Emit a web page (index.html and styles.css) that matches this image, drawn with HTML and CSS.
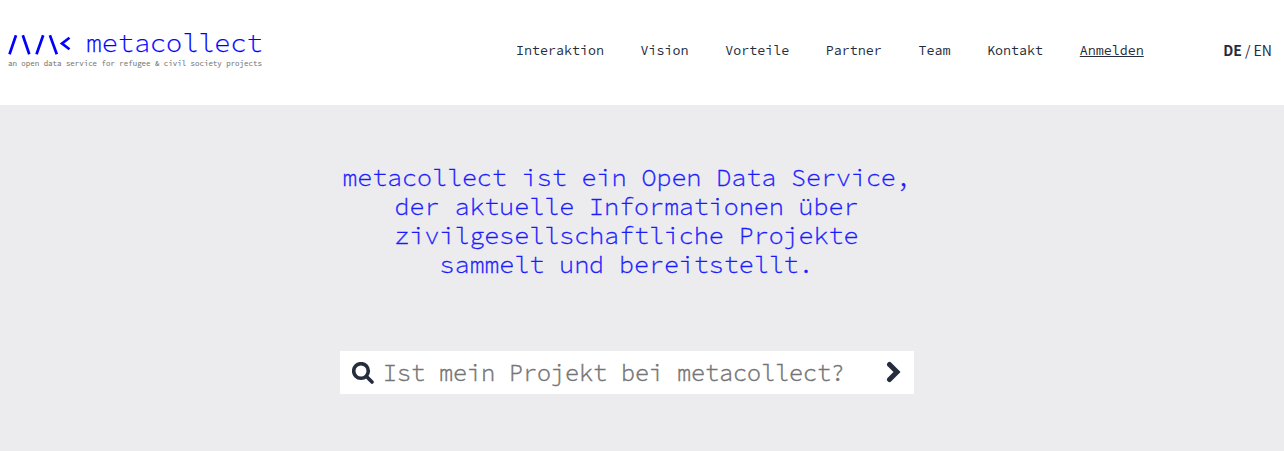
FILE: index.html
```html
<!DOCTYPE html>
<html lang="de"><head><meta charset="utf-8"><title>metacollect</title><link rel="stylesheet" href="styles.css"></head>
<body>
<header class="header">
<a class="brand"><span class="brand-row"><svg class="mark" viewBox="0 0 63 22" width="63" height="22"><path d="M1.500 20.300L8 1.300M14.800 1.300L21.300 20.300M28.500 20.300L35.200 1.300M41.900 1.300L48.800 20.300"/><path d="M61.500 3.800L54 9.500L61.500 15.200"/></svg><span class="name">metacollect</span></span><span class="tagline">an open data service for refugee &amp; civil society projects</span></a>
<nav class="nav"><a>Interaktion</a><a>Vision</a><a>Vorteile</a><a>Partner</a><a>Team</a><a>Kontakt</a><a class="login">Anmelden</a></nav>
<div class="lang"><b>DE</b> / EN</div>
</header>
<main class="hero">
<h1 class="title"><span>metacollect ist ein Open Data Service,</span><span>der aktuelle Informationen über</span><span>zivilgesellschaftliche Projekte</span><span>sammelt und bereitstellt.</span></h1>
<form class="search"><svg class="glass" viewBox="0 0 22 22" width="22" height="22"><circle cx="9" cy="9" r="7.300"/><path d="M14.500 14.500L20 20"/></svg><span class="placeholder">Ist mein Projekt bei metacollect?</span><svg class="arrow" viewBox="0 0 16 22" width="16" height="22"><path d="M3.500 3.500L11 11L3.500 18.500"/></svg></form>
</main>
</body></html>
```
FILE: styles.css
```css
* { box-sizing: border-box; }
body { margin: 0; background: #fff; color: #252c3d; font-family: "Source Code Pro", "Noto Sans Mono", "DejaVu Sans Mono", monospace; }
.header { height: 105px; display: flex; align-items: flex-start; white-space: nowrap; }
.brand { width: 516px; padding: 29px 0 0 8px; display: block; }
.brand-row { display: flex; height: 28px; align-items: center; }
.mark { margin-top: 3px; margin-right: 14.7px; fill: none; stroke: #00f; stroke-width: 2.7; }
.name { color: #00f; font-size: 26.8px; font-weight: 300; line-height: 28px; -webkit-text-stroke: .25px #00f; }
.tagline { display: block; color: #777; font-size: 7.43px; line-height: 14px; -webkit-text-stroke: .1px #777; }
.nav { display: flex; gap: 36.65px; font-size: 13.33px; line-height: 20px; padding-top: 41px; }
.login { text-decoration: underline; text-underline-offset: 1px; }
.lang { margin-left: auto; margin-right: 12px; padding-top: 40px; font: 14px/20px "Source Sans Pro", "Noto Sans CJK SC", "Noto Sans", sans-serif; }
.hero { height: 346px; background: #ececee; padding: 58px 0 0 340px; }
.title { margin: 0; width: 573px; color: #1a1aff; text-align: center; font-size: 24.95px; line-height: 29px; font-weight: 300; white-space: nowrap; -webkit-text-stroke: .35px #1a1aff; }
.title span { display: block; }
.search { margin-top: 72px; width: 574px; height: 43px; background: #fff; display: flex; align-items: center; padding: 0 12px; }
.glass, .arrow { flex: none; fill: none; stroke: #252c3d; stroke-width: 3.6; }
.glass { stroke-linecap: round; }
.arrow { margin-left: auto; stroke-width: 5; margin-bottom: 2px; stroke-linecap: round; }
.placeholder { margin-left: 9px; font-size: 23.33px; line-height: 40px; color: #757575; font-weight: 300; -webkit-text-stroke: .5px #757575; white-space: nowrap; padding-top: 1px; }
```
